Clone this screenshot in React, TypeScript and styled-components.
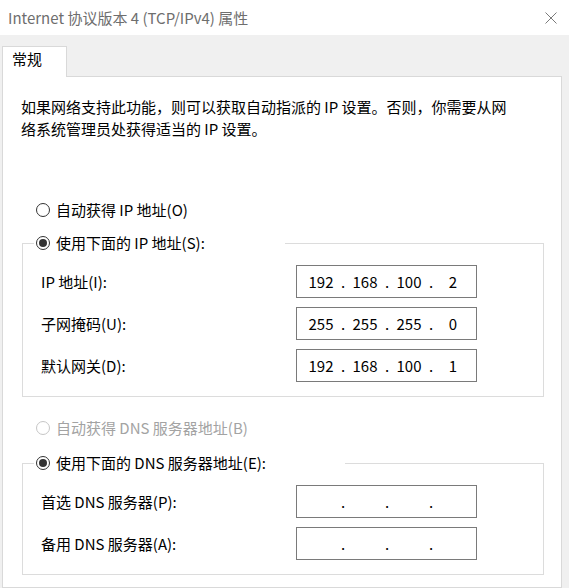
import React from "react";
import styled, { createGlobalStyle } from "styled-components";

const GlobalStyle = createGlobalStyle`
  html, body {
    margin: 0;
    padding: 0;
    background: #f0f0f0;
  }
  body {
    font-family: "Noto Sans CJK SC", "Noto Sans", sans-serif;
    color: #000;
  }
`;

const Window = styled.div`
  width: 569px;
  height: 588px;
  display: flex;
  flex-direction: column;
  background: #f0f0f0;
  overflow: hidden;
`;

const TitleBar = styled.div`
  height: 35px;
  flex: none;
  display: flex;
  align-items: center;
  justify-content: space-between;
  padding: 0 12px 0 8px;
  background: #fff;
`;

const Title = styled.div`
  font-size: 15px;
  line-height: 20px;
  color: #6e6e6e;
`;

const CloseButton = styled.div`
  width: 12px;
  height: 12px;
  display: flex;
`;

const Body = styled.div`
  flex: 1;
  min-height: 0;
  display: flex;
  flex-direction: column;
  padding: 11px 7px 0 2px;
`;

const TabStrip = styled.div`
  display: flex;
`;

const Tab = styled.div`
  position: relative;
  z-index: 1;
  width: 65px;
  height: 31px;
  box-sizing: border-box;
  margin-bottom: -1px;
  padding: 1px 0 0 9px;
  border: 1px solid #d9d9d9;
  border-bottom: none;
  background: #fff;
  font-size: 15px;
  line-height: 22px;
`;

const Panel = styled.div`
  flex: 1;
  background: #fff;
  border: 1px solid #d9d9d9;
`;

const Intro = styled.p`
  margin: 0;
  padding: 19px 0 0 18px;
  font-size: 15px;
  line-height: 22px;
`;

const Option = styled.label<{ $disabled?: boolean }>`
  display: flex;
  align-items: center;
  gap: 6px;
  height: 22px;
  font-size: 15px;
  line-height: 22px;
  color: ${(p) => (p.$disabled ? "#a3a3a3" : "#000")};
`;

const OptionRow = styled.div<{ $top: number }>`
  margin: ${(p) => p.$top}px 0 0 33px;
`;

const Radio = styled.span<{ $checked?: boolean; $disabled?: boolean }>`
  width: 14px;
  height: 14px;
  flex: none;
  box-sizing: border-box;
  border-radius: 50%;
  border: 1px solid ${(p) => (p.$disabled ? "#c6c6c6" : "#333")};
  background: #fff;
  display: flex;
  align-items: center;
  justify-content: center;

  &::after {
    content: "";
    width: 8px;
    height: 8px;
    border-radius: 50%;
    background: #333;
    display: ${(p) => (p.$checked ? "block" : "none")};
  }
`;

const Group = styled.fieldset<{ $top: number }>`
  margin: ${(p) => p.$top}px 0 0 19px;
  width: 522px;
  min-width: 0;
  box-sizing: border-box;
  padding: 0 0 14px 0;
  border: 1px solid #dcdcdc;
`;

const Legend = styled.legend<{ $width: number }>`
  margin-left: 11px;
  padding: 0 0 0 2px;
  width: ${(p) => p.$width}px;
  box-sizing: border-box;
`;

const FieldGrid = styled.div`
  margin: 11px 0 0 18px;
  display: grid;
  grid-template-columns: 255px 181px;
  grid-auto-rows: 33px;
  row-gap: 9px;
  align-items: center;
`;

const FieldLabel = styled.span`
  font-size: 15px;
  line-height: 22px;
`;

const IpBox = styled.div`
  height: 33px;
  box-sizing: border-box;
  border: 1px solid #7a7a7a;
  background: #fff;
  display: flex;
  align-items: center;
  padding-left: 4px;
  font-size: 15px;
  line-height: 22px;
`;

const Octet = styled.span`
  width: 40px;
  text-align: center;
`;

const Dot = styled.span`
  width: 4px;
  text-align: center;
`;

const CloseIcon = () => (
  <svg width="12" height="12" viewBox="0 0 12 12">
    <path d="M0.5 0.5 L11.5 11.5 M11.5 0.5 L0.5 11.5" stroke="#7a7a7a" strokeWidth="1" fill="none" />
  </svg>
);

const IpInput: React.FC<{ value?: string[] }> = ({ value = ["", "", "", ""] }) => (
  <IpBox>
    {value.map((part, i) => (
      <React.Fragment key={i}>
        <Octet>{part}</Octet>
        {i < 3 && <Dot>.</Dot>}
      </React.Fragment>
    ))}
  </IpBox>
);

interface FieldProps {
  label: string;
  value?: string[];
}
const Field: React.FC<FieldProps> = ({ label, value }) => (
  <>
    <FieldLabel>{label}</FieldLabel>
    <IpInput value={value} />
  </>
);

const App: React.FC = () => (
  <>
    <GlobalStyle />
    <Window>
      <TitleBar>
        <Title>Internet 协议版本 4 (TCP/IPv4) 属性</Title>
        <CloseButton>
          <CloseIcon />
        </CloseButton>
      </TitleBar>
      <Body>
        <TabStrip>
          <Tab>常规</Tab>
        </TabStrip>
        <Panel>
          <Intro>
            如果网络支持此功能，则可以获取自动指派的 IP 设置。否则，你需要从网
            <br />
            络系统管理员处获得适当的 IP 设置。
          </Intro>

          <OptionRow $top={59}>
            <Option>
              <Radio />
              自动获得 IP 地址(O)
            </Option>
          </OptionRow>
          <Group $top={11}>
            <Legend $width={251}>
              <Option>
                <Radio $checked />
                使用下面的 IP 地址(S):
              </Option>
            </Legend>
            <FieldGrid>
              <Field label="IP 地址(I):" value={["192", "168", "100", "2"]} />
              <Field label="子网掩码(U):" value={["255", "255", "255", "0"]} />
              <Field label="默认网关(D):" value={["192", "168", "100", "1"]} />
            </FieldGrid>
          </Group>

          <OptionRow $top={20}>
            <Option $disabled>
              <Radio $disabled />
              自动获得 DNS 服务器地址(B)
            </Option>
          </OptionRow>
          <Group $top={13}>
            <Legend $width={311}>
              <Option>
                <Radio $checked />
                使用下面的 DNS 服务器地址(E):
              </Option>
            </Legend>
            <FieldGrid>
              <Field label="首选 DNS 服务器(P):" />
              <Field label="备用 DNS 服务器(A):" />
            </FieldGrid>
          </Group>
        </Panel>
      </Body>
    </Window>
  </>
);

export default App;
